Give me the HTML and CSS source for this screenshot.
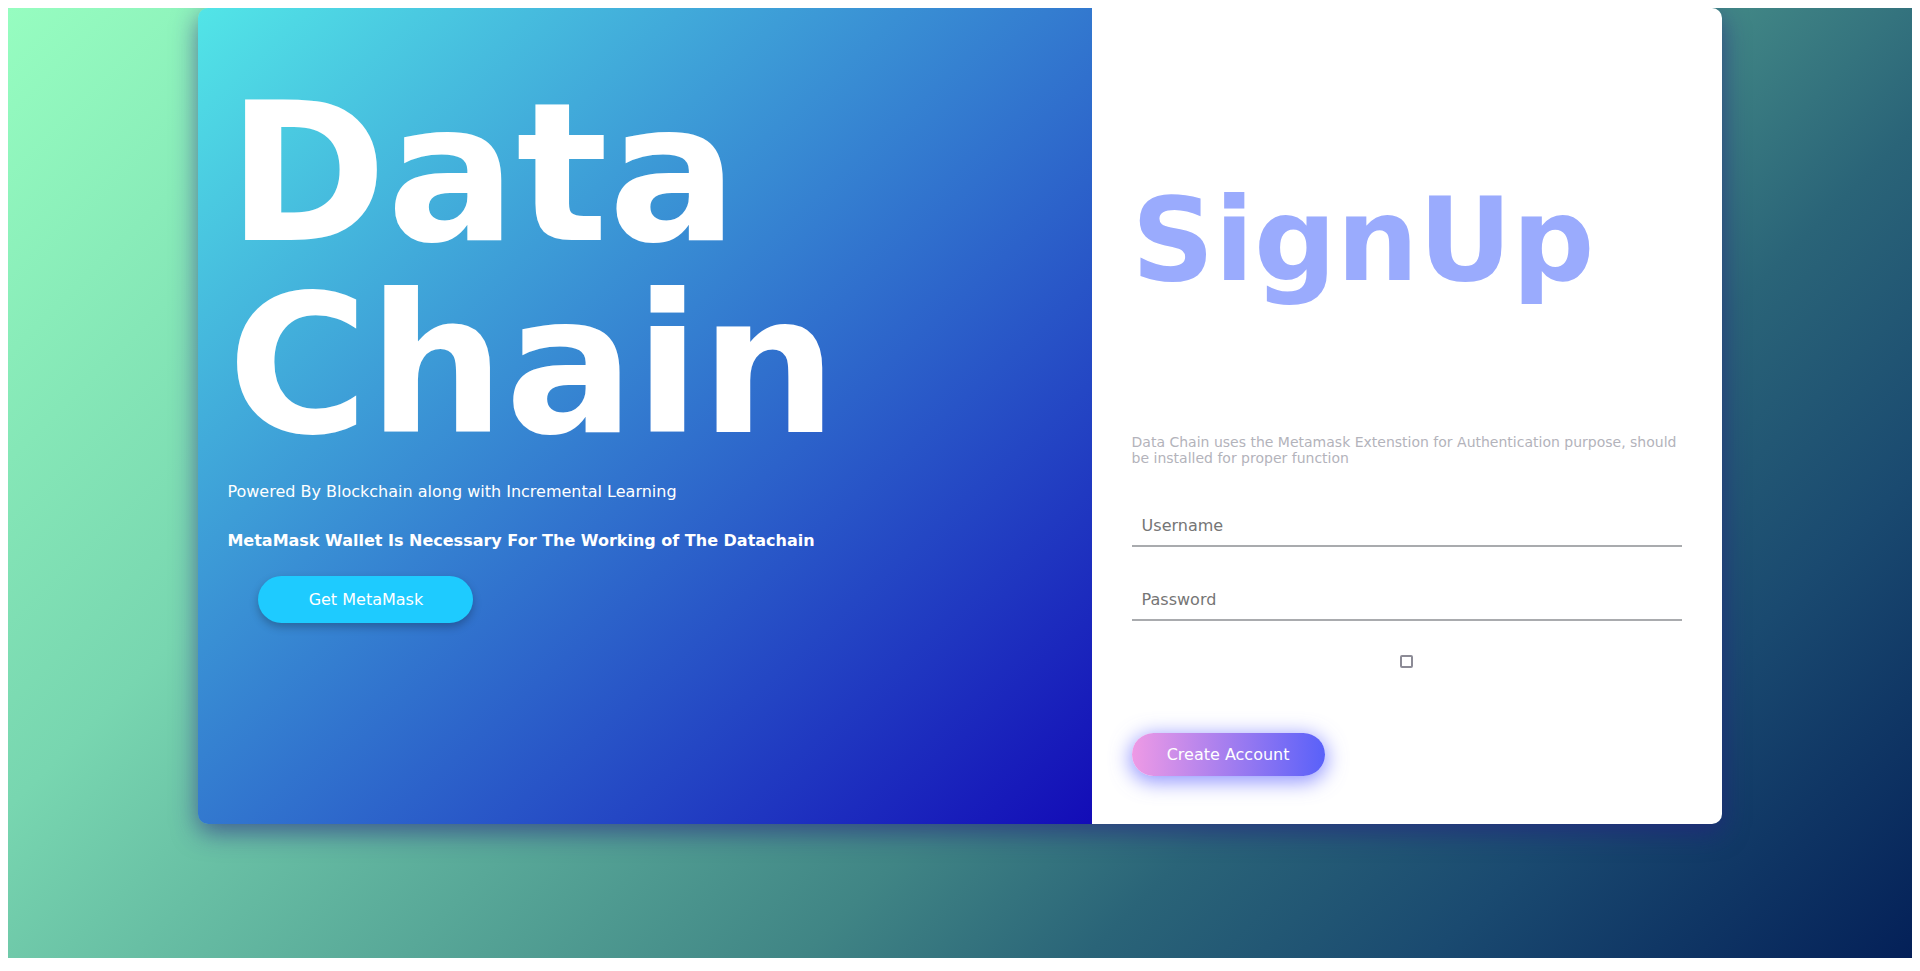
FILE: index.html
```html
<!DOCTYPE html>
<html lang="en">
<head>
<meta charset="utf-8">
<title>Data Chain - SignUp</title>
<link rel="stylesheet" href="styles.css">
</head>
<body>
<div class="page">
  <div class="card">
    <section class="hero">
      <h1 class="hero-title">Data Chain</h1>
      <p class="hero-sub">Powered By Blockchain along with Incremental Learning</p>
      <p class="hero-note">MetaMask Wallet Is Necessary For The Working of The Datachain</p>
      <button class="btn-metamask" type="button">Get MetaMask</button>
    </section>
    <section class="signup">
      <h2 class="signup-title">SignUp</h2>
      <p class="signup-info">Data Chain uses the Metamask Extenstion for Authentication purpose, should be installed for proper function</p>
      <form class="signup-form">
        <input class="field" type="text" placeholder="Username">
        <input class="field field-pass" type="password" placeholder="Password">
        <div class="check-row"><input class="check" type="checkbox"></div>
        <button class="btn-create" type="button">Create Account</button>
      </form>
    </section>
  </div>
</div>
</body>
</html>
```
FILE: styles.css
```css
* { box-sizing: border-box; }

body {
  margin: 8px;
  font-family: "DejaVu Sans", sans-serif;
}

.page {
  height: 950px;
  background: linear-gradient(135deg,
    #96fdc0 0%,
    #78d6b0 28%,
    #58a898 47%,
    #408585 61%,
    #2a6478 71%,
    #1a4a70 83%,
    #042058 100%);
  display: flex;
  justify-content: center;
  align-items: flex-start;
}

.card {
  width: 80%;
  height: 816px;
  display: grid;
  grid-template-columns: 1fr 630px;
  border-radius: 10px;
  overflow: hidden;
  box-shadow: 0 8px 26px rgba(40, 30, 130, 0.62);
}

.hero {
  background: linear-gradient(to bottom right, #52e5e7, #130cb7);
  color: #fff;
  padding: 0 29px;
}

.hero-title {
  margin: 70px 0 0;
  font-size: 192px;
  line-height: 1;
  font-weight: bold;
}

.hero-sub {
  margin: 20px 0 0;
  font-size: 16px;
}

.hero-note {
  margin: 30px 0 0;
  font-size: 16px;
  font-weight: bold;
}

.btn-metamask {
  margin: 26px 0 0 31px;
  width: 215px;
  height: 47px;
  border: none;
  border-radius: 24px;
  background: #1ecbff;
  color: #fff;
  font-family: "DejaVu Sans", sans-serif;
  font-size: 16px;
  box-shadow: 0 4px 8px rgba(0, 0, 0, 0.25);
}

.signup {
  background: #fff;
  padding: 0 40px;
}

.signup-title {
  margin: 165px 0 0;
  font-size: 115.2px;
  font-weight: bold;
  color: #9aabfd;
}

.signup-info {
  margin: 127px 0 0;
  font-size: 14px;
  color: #b3b3bb;
}

.signup-form {
  display: flex;
  flex-direction: column;
  align-items: flex-start;
}

.field {
  width: 100%;
  margin-top: 40px;
  padding: 10px;
  border: none;
  border-bottom: 2px solid #a9abae;
  font-family: "DejaVu Sans", sans-serif;
  font-size: 16px;
  outline: none;
  background: transparent;
}

.field::placeholder { color: #757575; }

.field-pass { margin-top: 33px; }

.check-row {
  width: 100%;
  display: flex;
  justify-content: center;
  margin-top: 34px;
}

.check {
  appearance: none;
  -webkit-appearance: none;
  margin: 0;
  width: 13px;
  height: 13px;
  border: 2px solid #8c8b96;
  border-radius: 2px;
  background: #fff;
}

.btn-create {
  margin-top: 65px;
  width: 193px;
  height: 43px;
  border: none;
  border-radius: 22px;
  background: linear-gradient(to right, #ee9ae5, #5961f9);
  color: #fff;
  font-family: "DejaVu Sans", sans-serif;
  font-size: 16px;
  box-shadow: 0 4px 20px 2px rgba(100, 105, 255, 0.7);
}
```
